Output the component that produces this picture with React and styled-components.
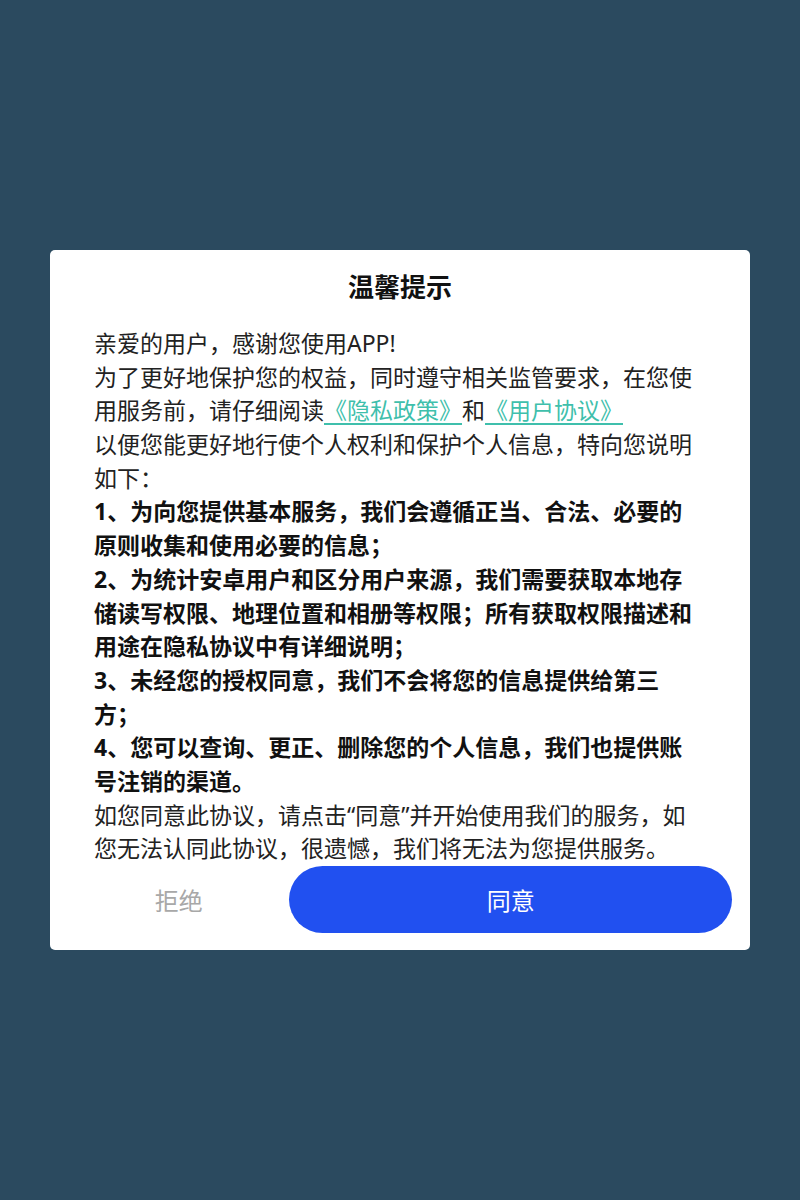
import React from "react";
import styled, { createGlobalStyle } from "styled-components";

const Global = createGlobalStyle`
  html, body { margin: 0; padding: 0; }
  body {
    background: #2b4a5f;
    font-family: "Noto Sans CJK SC", "Noto Sans", sans-serif;
  }
`;

const Screen = styled.div`
  width: 800px;
  height: 1200px;
  display: flex;
  align-items: center;
  justify-content: center;
  background: #2b4a5f;
`;

const Card = styled.div`
  width: 700px;
  background: #ffffff;
  border-radius: 5px;
  box-sizing: border-box;
  padding: 18px 18px 17px;
  display: flex;
  flex-direction: column;
`;

const Title = styled.h2`
  margin: 0;
  font-size: 26px;
  line-height: 36px;
  font-weight: 700;
  color: #111;
  text-align: center;
`;

const Body = styled.div`
  margin: 23px 32px 0 26px;
  font-family: "Noto Sans", "Noto Sans CJK SC", sans-serif;
  font-size: 23px;
  line-height: 33.7px;
  color: #222;
`;

const Para = styled.p`
  margin: 0;
  font-weight: ${(p) => (p.$bold ? 700 : 400)};
  color: ${(p) => (p.$bold ? "#111" : "#222")};
`;

const Link = styled.a`
  color: #3fbfac;
  text-decoration: underline;
  text-decoration-color: #3fbfac;
  text-underline-offset: 4px;
  text-decoration-thickness: 1.5px;
`;

const Actions = styled.div`
  display: flex;
  align-items: center;
  height: 67px;
`;

const Refuse = styled.button`
  flex: 1;
  height: 100%;
  border: none;
  background: transparent;
  color: #a8a8a8;
  font-family: inherit;
  font-size: 24px;
  padding: 0;
`;

const Agree = styled.button`
  flex: 2;
  height: 100%;
  border: none;
  border-radius: 34px;
  background: #2150f0;
  color: #ffffff;
  font-family: inherit;
  font-size: 24px;
  padding: 0;
`;

export default function App() {
  return (
    <Screen>
      <Global />
      <Card>
        <Title>温馨提示</Title>
        <Body>
          <Para>亲爱的用户，感谢您使用APP!</Para>
          <Para>
            为了更好地保护您的权益，同时遵守相关监管要求，在您使用服务前，请仔细阅读
            <Link>《隐私政策》</Link>和<Link>《用户协议》</Link>
          </Para>
          <Para>以便您能更好地行使个人权利和保护个人信息，特向您说明如下：</Para>
          <Para $bold>1、为向您提供基本服务，我们会遵循正当、合法、必要的原则收集和使用必要的信息；</Para>
          <Para $bold>2、为统计安卓用户和区分用户来源，我们需要获取本地存储读写权限、地理位置和相册等权限；所有获取权限描述和用途在隐私协议中有详细说明；</Para>
          <Para $bold>3、未经您的授权同意，我们不会将您的信息提供给第三方；</Para>
          <Para $bold>4、您可以查询、更正、删除您的个人信息，我们也提供账号注销的渠道。</Para>
          <Para>如您同意此协议，请点击“同意”并开始使用我们的服务，如您无法认同此协议，很遗憾，我们将无法为您提供服务。</Para>
        </Body>
        <Actions>
          <Refuse>拒绝</Refuse>
          <Agree>同意</Agree>
        </Actions>
      </Card>
    </Screen>
  );
}
